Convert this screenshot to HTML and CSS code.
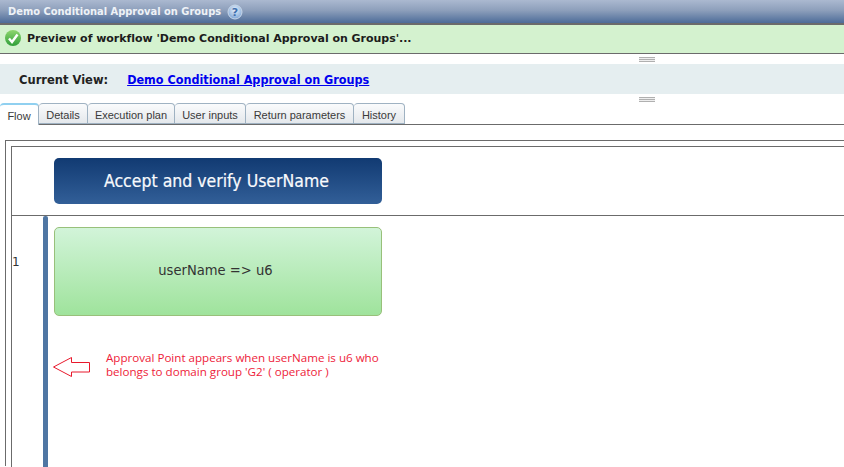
FILE: index.html
```html
<!DOCTYPE html>
<html>
<head>
<meta charset="utf-8">
<title>Demo Conditional Approval on Groups</title>
<link rel="stylesheet" href="styles.css">
</head>
<body>
<header class="titlebar">
  <span class="title">Demo Conditional Approval on Groups</span>
  <svg class="help" width="16" height="16" viewBox="0 0 16 16"><defs><radialGradient id="h" cx="50%" cy="35%" r="65%"><stop offset="0" stop-color="#e8f1fb"/><stop offset="1" stop-color="#7fa6d6"/></radialGradient></defs><circle cx="8" cy="8" r="7" fill="url(#h)" stroke="#c9d8ea"/><text x="8" y="12" text-anchor="middle" class="help-mark">?</text></svg>
</header>
<div class="notice">
  <svg width="18" height="18" viewBox="0 0 18 18"><defs><linearGradient id="g" x1="0" y1="0" x2="0" y2="1"><stop offset="0" stop-color="#8fd66f"/><stop offset="1" stop-color="#2f9e3a"/></linearGradient></defs><circle cx="9" cy="9" r="8" fill="url(#g)"/><path d="M5 9.5 8 13 13.5 5.5" fill="none" stroke="#fff" stroke-width="2.4"/></svg>
  <span>Preview of workflow 'Demo Conditional Approval on Groups'...</span>
</div>
<div class="grip"></div>
<div class="view">
  <span class="view-label">Current View:</span>
  <a class="view-link" href="#">Demo Conditional Approval on Groups</a>
</div>
<div class="grip"></div>
<nav class="tabs">
  <span class="tab active">Flow</span>
  <span class="tab">Details</span>
  <span class="tab">Execution plan</span>
  <span class="tab">User inputs</span>
  <span class="tab">Return parameters</span>
  <span class="tab">History</span>
</nav>
<main class="outer">
  <div class="inner">
    <div class="head-row">
      <div class="stage">Accept and verify UserName</div>
    </div>
    <div class="flow-row">
      <div class="num">1</div>
      <div class="rail"></div>
      <div class="flow-col">
        <div class="step">userName =&gt; u6</div>
        <div class="note">
          <svg class="arrow" width="38" height="20" viewBox="0 0 38 20"><path d="M0.5 10 18.5 0.5V5.5H36.5V15H18.5V19.5Z" fill="#fff" stroke="#e8192c"/></svg>
          <p>Approval Point appears when userName is u6 who<br>belongs to domain group 'G2' ( operator )</p>
        </div>
      </div>
    </div>
  </div>
</main>
</body>
</html>
```
FILE: styles.css
```css
html, body { margin: 0; padding: 0; }
body {
  width: 844px;
  height: 467px;
  overflow: hidden;
  background: #fff;
  font-family: "DejaVu Sans", sans-serif;
}
.titlebar {
  height: 23px;
  box-sizing: border-box;
  padding-left: 8px;
  display: flex;
  align-items: center;
  gap: 6px;
  background: linear-gradient(#abb9d0, #8d9fbb 45%, #4d6c99);
}
.title {
  color: #eef2f7;
  font: bold 11px "DejaVu Sans Condensed", "DejaVu Sans", sans-serif;
}
.help-mark { font: bold 11px "DejaVu Sans", sans-serif; fill: #3f6fae; }
.notice {
  height: 31px;
  box-sizing: border-box;
  border-top: 2px solid #6b6b6b;
  border-bottom: 1px solid #6b6b6b;
  background: #d4f2cf;
  display: flex;
  align-items: center;
  gap: 5px;
  padding: 0 0 2px 4px;
  font: bold 11px "DejaVu Sans", sans-serif;
  letter-spacing: -0.03px;
  color: #1c1c1c;
}
.grip {
  height: 5px;
  width: 16px;
  margin: 3px 0 2px 639px;
  box-sizing: border-box;
  background: repeating-linear-gradient(#b0b0b0 0 1px, #eee 1px 2px);
  border-bottom: 1px solid #b0b0b0;
}
.view + .grip { margin-bottom: 1px; }
.view {
  height: 30px;
  box-sizing: border-box;
  padding: 1px 0 0 19px;
  background: #e5eef0;
  display: flex;
  align-items: center;
  gap: 19px;
  font-size: 11.5px;
  font-weight: bold;
}
.view-label { color: #222; }
.view-link {
  color: #0000ee;
  font: bold 12.5px "DejaVu Sans Condensed", "DejaVu Sans", sans-serif;
}
.tabs {
  height: 22px;
  box-sizing: border-box;
  border-bottom: 1px solid #6b6b6b;
  display: flex;
}
.tab {
  height: 21px;
  box-sizing: border-box;
  padding-top: 5px;
  text-align: center;
  font: 11px "Liberation Sans", sans-serif;
  color: #3a3a3a;
  background: linear-gradient(#fafbfc, #e4e8ec);
  border: 1px solid #9fb2c2;
  border-left: 0;
  border-radius: 4px 4px 0 0;
}
.tab:nth-child(1) { width: 39px; }
.tab:nth-child(2) { width: 49px; }
.tab:nth-child(3) { width: 87px; }
.tab:nth-child(4) { width: 71px; }
.tab:nth-child(5) { width: 108px; }
.tab:nth-child(6) { width: 51px; }
.tab.active {
  background: #fff;
  border-top: 2px solid #90d0f0;
  border-bottom: 0;
  height: 22px;
}
.outer {
  margin: 15px 0 0 5px;
  border: 1px solid #6b6b6b;
  border-right: 0;
  border-bottom: 0;
  padding: 5px 0 0 5px;
  height: 320px;
}
.inner {
  border: 1px solid #6b6b6b;
  border-right: 0;
  border-bottom: 0;
  height: 320px;
}
.head-row {
  height: 69px;
  box-sizing: border-box;
  border-bottom: 1px solid #6b6b6b;
  padding: 11px 0 0 42px;
}
.stage {
  width: 328px;
  height: 46px;
  box-sizing: border-box;
  padding-right: 3px;
  border-radius: 5px;
  background: linear-gradient(#113a72, #325f98);
  color: #f8fafd;
  display: flex;
  align-items: center;
  justify-content: center;
  font: 17.5px "DejaVu Sans Condensed", "DejaVu Sans", sans-serif;
  -webkit-text-stroke: 0.2px #f8fafd;
}
.flow-row { display: flex; }
.num {
  width: 31px;
  padding-top: 39px;
  font: 12px "DejaVu Sans", sans-serif;
  color: #333;
}
.rail {
  width: 5px;
  height: 251px;
  background: #4f76a3;
  border-radius: 2px 2px 0 0;
}
.flow-col { margin-left: 6px; padding-top: 11px; }
.step {
  width: 328px;
  height: 89px;
  box-sizing: border-box;
  padding: 0 5px 4px 0;
  border: 1px solid #98c07a;
  border-radius: 5px;
  background: linear-gradient(#d2f4d9, #9fe39c);
  display: flex;
  align-items: center;
  justify-content: center;
  font: 14.6px "DejaVu Sans Condensed", "DejaVu Sans", sans-serif;
  color: #333;
}
.note {
  margin-top: 36px;
  display: flex;
  color: #ee1c3a;
}
.arrow { margin-top: 5px; margin-left: -1px; }
.note p {
  margin: -1px 0 0 15px;
  font: 11.6px/14px "Open Sans", sans-serif;
}
```
